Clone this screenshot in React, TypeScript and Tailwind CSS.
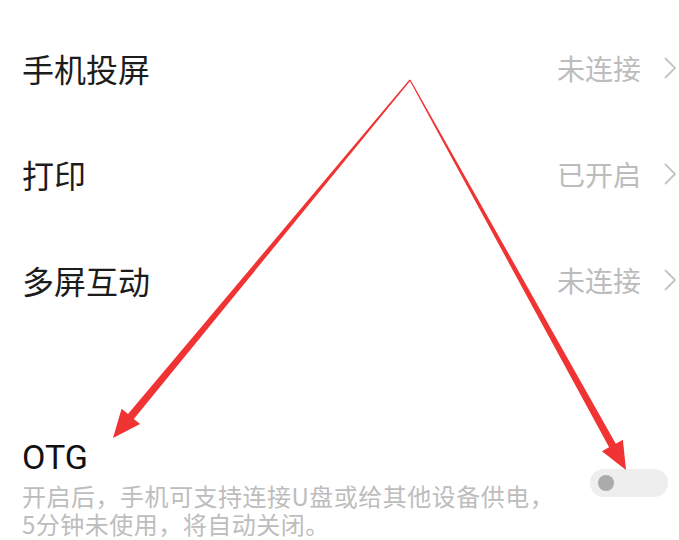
import React from 'react';

type Pt = [number, number];

// Tapered callout arrow: hairline at the start, widening shaft, solid head at the end.
function arrowPoints(from: Pt, to: Pt, head = 28, headHalf = 12, shaftHalf = 3.8) {
  const dx = to[0] - from[0];
  const dy = to[1] - from[1];
  const len = Math.hypot(dx, dy);
  const ux = dx / len;
  const uy = dy / len;
  const nx = -uy;
  const ny = ux;
  const bx = to[0] - ux * head;
  const by = to[1] - uy * head;
  const pts: Pt[] = [
    [from[0] + nx * 0.6, from[1] + ny * 0.6],
    [bx + nx * shaftHalf, by + ny * shaftHalf],
    [bx + nx * headHalf, by + ny * headHalf],
    to,
    [bx - nx * headHalf, by - ny * headHalf],
    [bx - nx * shaftHalf, by - ny * shaftHalf],
    [from[0] - nx * 0.6, from[1] - ny * 0.6],
  ];
  return pts.map((p) => `${p[0].toFixed(1)},${p[1].toFixed(1)}`).join(' ');
}

function Chevron() {
  return (
    <svg width="14" height="24" viewBox="0 0 14 24" className="ml-[22px]">
      <polyline points="2,2 12,12 2,22" fill="none" stroke="#c4c4c4" strokeWidth="1.8" strokeLinejoin="round" />
    </svg>
  );
}

const rows = [
  { title: '手机投屏', status: '未连接' },
  { title: '打印', status: '已开启' },
  { title: '多屏互动', status: '未连接' },
];

export default function App() {
  const apex: Pt = [410, 80];

  return (
    <div
      className="relative w-[679px] h-[540px] overflow-hidden bg-white"
      style={{ fontFamily: '"Noto Sans CJK SC", "Noto Sans", sans-serif' }}
    >
      <div className="pt-[15px] pl-[22px] pr-[2px]">
        {rows.map((row) => (
          <div key={row.title} className="flex h-[106px] items-center justify-between">
            <span className="text-[32px] leading-none text-[#1c1c1c]">{row.title}</span>
            <div className="flex items-center">
              <span className="text-[28px] leading-none text-[#bcbcbc]">{row.status}</span>
              <Chevron />
            </div>
          </div>
        ))}

        {/* OTG switch */}
        <div className="mt-[106px] flex items-end justify-between pr-[9px]">
          <div>
            <div className="text-[34px] leading-[36px] text-[#111]" style={{ fontFamily: 'Roboto, "Noto Sans", sans-serif' }}>
              OTG
            </div>
            <div className="mt-[7px] text-[24px] leading-[28px] tracking-[0.5px] text-[#bdbdbd]">
              <div>开启后，手机可支持连接U盘或给其他设备供电，</div>
              <div>5分钟未使用，将自动关闭。</div>
            </div>
          </div>
          <div className="mb-[41px] flex h-[28px] w-[78px] items-center rounded-full bg-[#eeeeee] pl-[8px]">
            <div className="h-[16px] w-[16px] rounded-full bg-[#ababab]" />
          </div>
        </div>
      </div>

      <svg className="pointer-events-none absolute inset-0" width="679" height="540">
        <polygon points={arrowPoints(apex, [113, 438])} fill="#f03434" />
        <polygon points={arrowPoints(apex, [626, 470])} fill="#f03434" />
      </svg>
    </div>
  );
}
